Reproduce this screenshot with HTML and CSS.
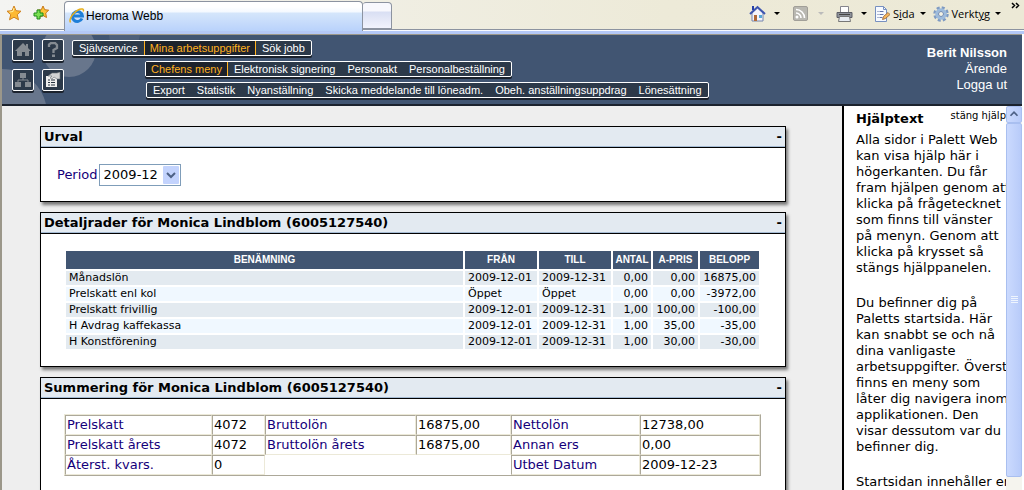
FILE: index.html
```html
<!DOCTYPE html>
<html lang="sv">
<head>
<meta charset="utf-8">
<title>Heroma Webb</title>
<link rel="stylesheet" href="styles.css">
</head>
<body>
<div class="browser">
  <div class="chrome">
    <div class="fav-tools">
      <button class="tool" aria-label="Favoriter"><svg width="16" height="16" viewBox="0 0 16 16"><path d="M8 1l2 4.700 5 .5-3.700 3.500 1.200 5.100L8 12.200l-4.500 2.600 1.200-5.100L1 6.200l5-.5z" fill="#fdb933" stroke="#d08322"/><path d="M8 3L7 6.500 3.500 7" stroke="#fff0a0" fill="none"/></svg></button>
      <button class="tool" aria-label="Lägg till favorit"><svg width="16" height="16" viewBox="0 0 16 16"><path d="M10 1l1.700 3.700 4 .5-3 2.800.8 4.500L10 10.500 6 12.500 7 8 4 5.200l4.300-.5z" fill="#fdc433" stroke="#c77617"/><path d="M4 5h3v3h3v3H7v3H4v-3H1V8h3z" fill="#7be052" stroke="#1d8a1d"/></svg></button>
    </div>
    <div class="tab"><svg width="16" height="16" viewBox="0 0 16 16"><path d="M13 10.500A5 5 0 1 1 13.400 8H5" fill="none" stroke="#1f7fd8" stroke-width="3"/><path d="M1.500 14.500C-1 10 8 0 13.500 1c1 .2 1.300 1.200.6 2.500" fill="none" stroke="#e8b01c" stroke-width="1.500"/></svg><span>Heroma Webb</span></div>
    <button class="new-tab" aria-label="Ny flik"></button>
    <div class="commands">
      <button class="tool home" aria-label="Startsida"><svg width="17" height="17" viewBox="0 0 17 17"><path d="M3 8v8h11V8L8.500 3z" fill="#f4f4fb" stroke="#7483ac"/><path d="M1 9l7.500-7L16 9" fill="none" stroke="#3d55b0" stroke-width="2"/><path d="M3 1h2v4H3z" fill="#2740a8"/><path d="M5 10h3v6H5z" fill="#b06837"/><path d="M10 10h3v3h-3z" fill="#58a9d8"/></svg><i class="arrow"></i></button>
      <button class="tool feed" aria-label="Feeds"><svg width="15" height="15" viewBox="0 0 15 15"><rect x=".5" y=".5" width="14" height="14" rx="1.500" fill="#b9b8b1" stroke="#a19f98"/><circle cx="4" cy="11" r="1.500" fill="#fff"/><path d="M3 7a5 5 0 0 1 5 5M3 3.500A8.500 8.500 0 0 1 11.500 12" fill="none" stroke="#fff" stroke-width="1.600"/></svg><i class="arrow pale"></i></button>
      <button class="tool print" aria-label="Skriv ut"><svg width="17" height="16" viewBox="0 0 17 16"><path d="M4.500 7V.5h8V7" fill="#fff" stroke="#85858d"/><path d="M1 6.500h15v5H1z" fill="#8d919a" stroke="#5c5e66"/><path d="M3.500 10.500h10l1 5h-12z" fill="#e9edf3" stroke="#777"/><path d="M3 8.500h11" stroke="#444"/></svg><i class="arrow"></i></button>
      <button class="tool page"><svg width="16" height="16" viewBox="0 0 16 16"><path d="M1.500.5h8l3 3v12h-11z" fill="#f7faff" stroke="#7790c0"/><path d="M9.500.5v3h3" fill="none" stroke="#7790c0"/><path d="M3.500 5.500h1m1 0h4m-6 3h1m1 0h4m-6 3h1m1 0h3" stroke="#6476a9"/><path d="M8.500 13.500l1-3 4.500-4 2 2-4.500 4z" fill="#f6b65c" stroke="#a57445"/></svg><span>S<u>i</u>da</span><i class="arrow"></i></button>
      <button class="tool"><svg width="16" height="16" viewBox="0 0 16 16"><circle cx="8" cy="8" r="6.500" fill="none" stroke="#7e9ac2" stroke-width="2.500" stroke-dasharray="3 2.100"/><circle cx="8" cy="8" r="4.300" fill="#f4f2e4" stroke="#9dbbdc" stroke-width="3"/><circle cx="8" cy="8" r="2.500" fill="#f4f2e4" stroke="#6c88b5"/></svg><span>Verkt<u>y</u>g</span><i class="arrow"></i></button>
      <button class="tool more" aria-label="Mer"><svg width="9" height="7" viewBox="0 0 9 7"><path d="M1 1l2.500 2.500L1 6M5 1l2.500 2.500L5 6" fill="none" stroke="#000" stroke-width="1.500"/></svg></button>
    </div>
  </div>
  <div class="app">
    <header class="topbar">
      <svg class="blobs" width="200" height="69" viewBox="0 0 200 69"><circle cx="0" cy="79" r="45"/><circle cx="67" cy="15" r="27"/><path d="M107 0h31q-2 15-15 24Q108 16 107 0z" opacity=".35"/></svg>
      <nav class="shortcuts">
        <button aria-label="Hem"><svg width="16" height="16" viewBox="0 0 16 16"><path d="M8 1l3 3V2h2v4l3 3h-2v5h-4V10H7v4H2V9H0z" fill="#858b92"/></svg></button>
        <button aria-label="Hjälp"><svg width="16" height="16" viewBox="0 0 16 16"><path d="M4 5V2.500L6 1h4l2 2v3L8.500 8v3" fill="none" stroke="#858b92" stroke-width="2.300"/><path d="M7 12.500h3V15H7z" fill="#858b92"/></svg></button>
        <button aria-label="Organisation"><svg width="18" height="16" viewBox="0 0 18 16"><path d="M6 1h6v5H6zM1 10h6v5H1zM11 10h6v5h-6z" fill="#858b92"/><path d="M9 6v2M4 10V8h10v2" fill="none" stroke="#858b92"/></svg></button>
        <button aria-label="Blankett"><svg width="16" height="16" viewBox="0 0 16 16"><path d="M1 4h11v11H1z" fill="#eee"/><path d="M3 8h2m1 0h4M3 10.500h2m1 0h4M3 13h2m1 0h4" stroke="#26323f"/><path d="M3 4l4-3h5l3-1v7h-3L9 5 7 7 5 6l2-2z" fill="#d2d3d4" stroke="#6d7379" stroke-width=".6"/></svg></button>
      </nav>
      <div class="menus">
        <nav class="menu"><a href="#">Självservice</a><a href="#" class="on both">Mina arbetsuppgifter</a><a href="#">Sök jobb</a></nav>
        <nav class="menu second"><a href="#" class="on">Chefens meny</a><a href="#">Elektronisk signering</a><a href="#">Personakt</a><a href="#">Personalbeställning</a></nav>
        <nav class="menu third"><a href="#">Export</a><a href="#">Statistik</a><a href="#">Nyanställning</a><a href="#">Skicka meddelande till löneadm.</a><a href="#">Obeh. anställningsuppdrag</a><a href="#">Lönesättning</a></nav>
      </div>
      <div class="user"><strong>Berit Nilsson</strong><a href="#">Ärende</a><a href="#">Logga ut</a></div>
    </header>
    <div class="work">
      <main>
        <section class="panel">
          <h2>Urval<button aria-label="Dölj Urval">-</button></h2>
          <div class="filter"><label for="period">Period</label>
            <span class="pick"><select id="period"><option>2009-12</option></select><svg width="16" height="18" viewBox="0 0 16 18"><rect width="16" height="18" rx="1" fill="#c3d3fd"/><path d="M4 7l4 4 4-4" fill="none" stroke="#4d6185" stroke-width="2"/></svg></span>
          </div>
        </section>
        <section class="panel">
          <h2>Detaljrader för Monica Lindblom (6005127540)<button aria-label="Dölj Detaljrader">-</button></h2>
          <div class="details">
            <table class="rows">
              <colgroup><col><col class="c-date"><col class="c-date"><col class="c-count"><col class="c-price"><col class="c-sum"></colgroup>
              <thead><tr><th>BENÄMNING</th><th>FRÅN</th><th>TILL</th><th>ANTAL</th><th>A-PRIS</th><th>BELOPP</th></tr></thead>
              <tbody>
                <tr><td>Månadslön</td><td>2009-12-01</td><td>2009-12-31</td><td class="n">0,00</td><td class="n">0,00</td><td class="n">16875,00</td></tr>
                <tr><td>Prelskatt enl kol</td><td>Öppet</td><td>Öppet</td><td class="n">0,00</td><td class="n">0,00</td><td class="n">-3972,00</td></tr>
                <tr><td>Prelskatt frivillig</td><td>2009-12-01</td><td>2009-12-31</td><td class="n">1,00</td><td class="n">100,00</td><td class="n">-100,00</td></tr>
                <tr><td>H Avdrag kaffekassa</td><td>2009-12-01</td><td>2009-12-31</td><td class="n">1,00</td><td class="n">35,00</td><td class="n">-35,00</td></tr>
                <tr><td>H Konstförening</td><td>2009-12-01</td><td>2009-12-31</td><td class="n">1,00</td><td class="n">30,00</td><td class="n">-30,00</td></tr>
              </tbody>
            </table>
          </div>
        </section>
        <section class="panel">
          <h2>Summering för Monica Lindblom (6005127540)<button aria-label="Dölj Summering">-</button></h2>
          <div class="summary">
            <table class="sums">
              <colgroup><col class="s1"><col class="s2"><col class="s3"><col class="s4"><col class="s5"><col></colgroup>
              <tbody>
                <tr><th>Prelskatt</th><td>4072</td><th>Bruttolön</th><td>16875,00</td><th>Nettolön</th><td>12738,00</td></tr>
                <tr><th>Prelskatt årets</th><td>4072</td><th>Bruttolön årets</th><td>16875,00</td><th>Annan ers</th><td>0,00</td></tr>
                <tr><th>Återst. kvars.</th><td>0</td><td colspan="2" class="void"></td><th>Utbet Datum</th><td>2009-12-23</td></tr>
              </tbody>
            </table>
          </div>
        </section>
      </main>
      <aside>
        <div class="help">
          <div class="help-head"><h3>Hjälptext</h3><a href="#">stäng hjälp</a></div>
          <p>Alla sidor i Palett Web<br>kan visa hjälp här i<br>högerkanten. Du får<br>fram hjälpen genom att<br>klicka på frågetecknet<br>som finns till vänster<br>på menyn. Genom att<br>klicka på krysset så<br>stängs hjälppanelen.</p>
          <p>Du befinner dig på<br>Paletts startsida. Här<br>kan snabbt se och nå<br>dina vanligaste<br>arbetsuppgifter. Överst<br>finns en meny som<br>låter dig navigera inom<br>applikationen. Den<br>visar dessutom var du<br>befinner dig.</p>
          <p>Startsidan innehåller en</p>
        </div>
        <div class="scroll">
          <div class="up"><svg width="14" height="14" viewBox="0 0 16 16"><path d="M4 10l4-4 4 4" fill="none" stroke="#4d6185" stroke-width="2"/></svg></div>
          <div class="thumb"><svg width="7" height="8" viewBox="0 0 7 8"><path d="M0 .5h7M0 2.500h7M0 4.500h7M0 6.500h7" stroke="#eef4fe"/></svg></div>
        </div>
      </aside>
    </div>
  </div>
</div>
</body>
</html>
```
FILE: styles.css
```css
* { box-sizing: border-box; }
body { margin: 0; font-family: "DejaVu Sans", Verdana, sans-serif; font-size: 13px; line-height: 16px; color: #000; background: #fff; }
button { font: inherit; color: inherit; border: 0; padding: 0; background: none; }
a { color: inherit; text-decoration: none; }
h2, h3, p { margin: 0; }
svg { display: block; flex: none; }
.browser { display: flex; flex-direction: column; height: 100vh; overflow: hidden; }

.chrome { display: flex; align-items: flex-end; flex: none; height: 34px; border-bottom: 3px solid #b4c8f6; background: linear-gradient(90deg, #f4f4f2, #edead8 65%, #ece9d6); font: 11px/16px "Open Sans", Tahoma, sans-serif; box-shadow: inset 0 -1px #f8faff, inset 0 -2px #8c93a0; }
.fav-tools { display: flex; gap: 11px; width: 64px; padding: 0 0 10px 6px; }
.tool { display: flex; align-items: center; flex: none; }
.tab { display: flex; align-items: center; gap: 1px; width: 299px; height: 30px; padding: 0 4px 1px; border: 1px solid #8c93a0; border-bottom: 0; border-radius: 4px 4px 0 0; background: linear-gradient(#fff 0 5px, #f4f9ff 10px, #d5e6fb 11px, #b9d2fb); font: 11px/16px "DejaVu Sans", Tahoma, sans-serif; }
.tab { font: 12px/16px "Liberation Sans", Tahoma, sans-serif; }
.new-tab { width: 29px; height: 27px; margin-bottom: 2px; border: 1px solid #8c93a0; border-left: 0; border-radius: 3px 4px 0 0; background: linear-gradient(#f8f8fd 0 8px, #d9dff3 9px, #f2f3fc); }
.commands { display: flex; align-items: center; margin-left: auto; height: 31px; padding: 0 4px 4px 0; }
.home svg, .print svg { margin-right: 8px; }
.feed svg { margin-right: 10px; }
.home { margin-right: 13px; }
.feed { margin-right: 12px; }
.print, .page { margin-right: 7px; }
.tool span { margin: 0 5px 0 3px; }
.arrow { border: 3px solid transparent; border-top-color: #000; border-bottom: 0; }
.pale { border-top-color: #bbb; }
.more { align-self: flex-start; margin: 2px 0 0 10px; }

.app { display: flex; flex-direction: column; flex: 1; min-height: 0; border: solid #9b978a; border-width: 1px 0 0 2px; margin-right: 2px; }
.topbar { position: relative; display: flex; flex: none; padding: 4px 15px 6px 10px; background: #415572; border-bottom: 2px solid #1b222d; color: #fff; font: 11px/13px "Liberation Sans", Arial, sans-serif; }
.blobs { position: absolute; left: 0; top: 0; fill: #68768c; }
.shortcuts { position: relative; display: grid; grid-template-columns: 22px 22px; grid-auto-rows: 22px; gap: 8px; align-content: start; margin-right: 8px; }
.shortcuts button { display: flex; align-items: center; justify-content: center; border: 1px solid #fff; border-radius: 2px; background: #2c3949; box-shadow: 0 2px #1b222d; }
.menus { position: relative; display: flex; flex-direction: column; align-items: flex-start; gap: 5px; padding-top: 1px; }
.menu { display: flex; height: 16px; border: 1px solid #fff; border-radius: 2px; background: #2c3949; box-shadow: 0 2px #1b222d; white-space: nowrap; }
.menu a { padding: 1px 6px; }
.menu .on { color: #ffb120; background: #1c222c; border-right: 1px solid #ffb120; padding: 1px 5px; }
.menu .both { border-left: 1px solid #ffb120; }
.second { margin-left: 73px; }
.third { margin-left: 74px; }
.user { display: flex; flex-direction: column; align-items: flex-end; margin-left: auto; padding-top: 6px; font-size: 13px; line-height: 16px; }

.work { display: flex; flex: 1; min-height: 0; }
main { display: flex; flex-direction: column; gap: 10px; flex: 1; min-width: 0; padding: 20px 56px 0 38px; background: #eee; overflow: hidden; }
.panel { flex: none; border: 1px solid #000; background: #fff; box-shadow: 2px 3px 3px #777; }
.panel h2 { display: flex; justify-content: space-between; padding: 1px 3px 2px; border-bottom: 1px solid #000; background: #e3eaf1; box-shadow: inset 0 -1px #a5bbd3; font-size: 13px; line-height: 17px; }
.filter { display: flex; align-items: center; gap: 1px; padding: 16px 16px 15px; }
label, .sums th { color: #14007a; }
.pick { position: relative; }
.pick select { display: block; appearance: none; width: 82px; height: 22px; padding: 0 4px; border: 1px solid #7f9db9; border-radius: 0; background: #fff; font: inherit; color: #000; }
.pick svg { position: absolute; right: 2px; top: 2px; pointer-events: none; }

table { width: 100%; table-layout: fixed; }
td, th { overflow: hidden; white-space: nowrap; }
.details { padding: 15px 24px 15px 23px; }
.rows { border-spacing: 2px; font-size: 11px; line-height: 14px; }
.rows th { height: 18px; padding: 0; background: #415572; color: #fff; font: bold 10px/18px "Liberation Sans", Arial, sans-serif; }
.rows td { padding: 0 3px; background: #e3eaf0; }
.rows tr:nth-child(even) td { background: #f0f8ff; }
.rows .n { padding-left: 0; text-align: right; }
.c-date { width: 72px; }
.c-count { width: 38px; }
.c-price { width: 45px; }
.c-sum { width: 59px; }
.summary { padding: 15px 24px 15px 23px; }
.sums { border-spacing: 0; border: 1px solid; border-color: #ece9d8 #aca899 #aca899 #ece9d8; }
.sums th, .sums td { height: 20px; padding: 1px; border: 1px solid; border-color: #aca899 #ece9d8 #ece9d8 #aca899; font-weight: normal; text-align: left; }
.sums .void { border: 0; }
.s1 { width: 147px; }
.s2 { width: 53px; }
.s3 { width: 151px; }
.s4 { width: 95px; }
.s5 { width: 129px; }

aside { display: flex; width: 180px; border-left: 2px solid #000; background: #fff; }
.help { flex: 1; min-width: 0; overflow: hidden; padding: 3px 0 0 12px; white-space: nowrap; }
.help-head { display: flex; justify-content: space-between; gap: 26px; margin-bottom: 3px; }
.help-head h3 { font-size: 13px; line-height: 20px; }
.help-head a { font-size: 10px; line-height: 14px; }
.help p { margin-bottom: 19px; }
.scroll { display: flex; flex-direction: column; width: 16px; background: #f5f4ee; }
.up, .thumb { border: 1px solid #a9bff0; border-radius: 2px; background: linear-gradient(90deg, #cbdafe, #b8cbf9); }
.up { height: 17px; }
.thumb { display: flex; align-items: center; justify-content: center; flex: 1; margin: 0 0 13px; }
```
